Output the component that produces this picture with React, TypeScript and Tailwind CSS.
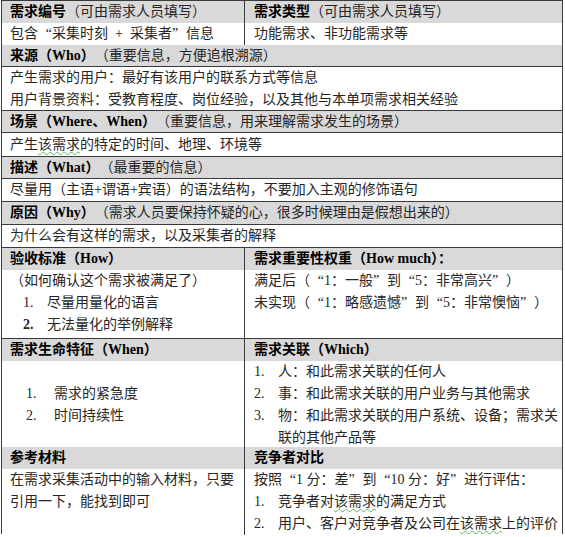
import type { ReactNode } from "react";

const line = "border-[#3a3a3a]";

function Cell({ children, gray, className = "" }: { children?: ReactNode; gray?: boolean; className?: string }) {
  return (
    <div className={`${gray ? "bg-[#d9d9d9]" : "bg-white"} ${className}`}>{children}</div>
  );
}

function Item({ n, lead, gap, children }: { n: string; lead: string; gap: string; children: ReactNode }) {
  return (
    <div className={`flex ${lead}`}>
      <span className={`shrink-0 ${gap}`}>{n}</span>
      <span>{children}</span>
    </div>
  );
}

function Sq({ children }: { children: ReactNode }) {
  return (
    <span className="underline decoration-wavy decoration-[#5cb85c] decoration-1 underline-offset-[2px]">
      {children}
    </span>
  );
}

// full-width curly quotes, like the song font in the source
function L() {
  return <span className="inline-block w-[14px] text-right">“</span>;
}
function R() {
  return <span className="inline-block w-[14px] text-left">”</span>;
}

export default function App() {
  return (
    <div className="min-h-[537px] bg-white">
      <div
        className={`ml-px w-[562px] border ${line} bg-white text-[14px] leading-[22px] text-[#262626] font-['Liberation_Serif','Noto_Sans_CJK_SC',serif]`}
      >
        {/* 编号 / 类型 */}
        <div className={`grid h-[22px] grid-cols-[243px_1fr] border-b ${line}`}>
          <Cell gray className={`flex items-center border-r ${line} pl-2`}>
            <b className="text-black">需求编号</b>（可由需求人员填写）
          </Cell>
          <Cell gray className="flex items-center pl-[9px]">
            <b className="text-black">需求类型</b>（可由需求人员填写）
          </Cell>
        </div>
        <div className={`grid h-[22px] grid-cols-[243px_1fr] border-b ${line}`}>
          <Cell className={`flex items-center border-r ${line} pl-2 whitespace-pre`}>
            包含<L />采集时刻{"  +  "}采集者<R />信息
          </Cell>
          <Cell className="flex items-center pl-[9px]">功能需求、非功能需求等</Cell>
        </div>

        {/* 来源 */}
        <Cell gray className={`flex h-[22px] items-center border-b ${line} pl-2`}>
          <b className="text-black">来源（Who）</b>（重要信息，方便追根溯源）
        </Cell>
        <Cell className={`flex h-[44px] flex-col justify-center border-b ${line} pl-2`}>
          <div>产生需求的用户：最好有该用户的联系方式等信息</div>
          <div>用户背景资料：受教育程度、岗位经验，以及其他与本单项需求相关经验</div>
        </Cell>

        {/* 场景 */}
        <Cell gray className={`flex h-[22px] items-center border-b ${line} pl-2`}>
          <b className="text-black">场景（Where、When）</b>（重要信息，用来理解需求发生的场景）
        </Cell>
        <Cell className={`flex h-[24px] items-center border-b ${line} pl-2`}>
          产生<Sq>该需求</Sq>的特定的时间、地理、环境等
        </Cell>

        {/* 描述 */}
        <Cell gray className={`flex h-[22px] items-center border-b ${line} pl-2`}>
          <b className="text-black">描述（What）</b>（最重要的信息）
        </Cell>
        <Cell className={`flex h-[23px] items-center border-b ${line} pl-2`}>
          尽量用（主语+谓语+宾语）的语法结构，不要加入主观的修饰语句
        </Cell>

        {/* 原因 */}
        <Cell gray className={`flex h-[23px] items-center border-b ${line} pl-2`}>
          <b className="text-black">原因（Why）</b>（需求人员要保持怀疑的心，很多时候理由是假想出来的）
        </Cell>
        <Cell className={`flex h-[23px] items-center border-b ${line} pl-2`}>
          为什么会有这样的需求，以及采集者的解释
        </Cell>

        {/* 验收标准 / 重要性 */}
        <div className={`grid h-[22px] grid-cols-[243px_1fr] border-b ${line}`}>
          <Cell gray className={`flex items-center border-r ${line} pl-2`}>
            <b className="text-black">验收标准（How）</b>
          </Cell>
          <Cell gray className="flex items-center pl-[9px]">
            <b className="text-black">需求重要性权重（How much）：</b>
          </Cell>
        </div>
        <div className={`grid h-[69px] grid-cols-[243px_1fr] border-b ${line}`}>
          <Cell className={`border-r ${line} pl-2`}>
            <div>（如何确认这个需求被满足了）</div>
            <Item n="1." lead="ml-[13px]" gap="w-[24px]">尽量用量化的语言</Item>
            <Item n="2." lead="ml-[13px]" gap="w-[24px] font-bold">无法量化的举例解释</Item>
          </Cell>
          <Cell className="pl-[9px]">
            <div>
              满足后（<L />1：一般<R />到<L />5：非常高兴<R />）
            </div>
            <div>
              未实现（<L />1：略感遗憾<R />到<L />5：非常懊恼<R />）
            </div>
          </Cell>
        </div>

        {/* 生命特征 / 关联 */}
        <div className={`grid h-[22px] grid-cols-[243px_1fr] border-b ${line}`}>
          <Cell gray className={`flex items-center border-r ${line} pl-2`}>
            <b className="text-black">需求生命特征（When）</b>
          </Cell>
          <Cell gray className="flex items-center pl-[9px]">
            <b className="text-black">需求关联（Which）</b>
          </Cell>
        </div>
        <div className={`grid h-[86px] grid-cols-[243px_1fr] border-b ${line}`}>
          <Cell className={`flex flex-col justify-center border-r ${line} pl-2`}>
            <Item n="1." lead="ml-[16px]" gap="w-[28px]">需求的紧急度</Item>
            <Item n="2." lead="ml-[16px]" gap="w-[28px]">时间持续性</Item>
          </Cell>
          <Cell className="pl-[9px] pr-1">
            <Item n="1." lead="" gap="w-[24px]">人：和此需求关联的任何人</Item>
            <Item n="2." lead="" gap="w-[24px]">事：和此需求关联的用户业务与其他需求</Item>
            <Item n="3." lead="" gap="w-[24px]">物：和此需求关联的用户系统、设备；需求关联的其他产品等</Item>
          </Cell>
        </div>

        {/* 参考材料 / 竞争者 */}
        <div className={`grid h-[22px] grid-cols-[243px_1fr] border-b ${line}`}>
          <Cell gray className={`flex items-center border-r ${line} pl-2`}>
            <b className="text-black">参考材料</b>
          </Cell>
          <Cell gray className="flex items-center pl-[9px]">
            <b className="text-black">竞争者对比</b>
          </Cell>
        </div>
        <div className="grid h-[64px] grid-cols-[243px_1fr]">
          <Cell className={`border-r ${line} pl-2 pr-1`}>
            在需求采集活动中的输入材料，只要引用一下，能找到即可
          </Cell>
          <Cell className="pl-[9px]">
            <div>
              按照<L />1 分：差<R />到<L />10 分：好<R />进行评估：
            </div>
            <Item n="1." lead="" gap="w-[24px]">
              竞争者对<Sq>该需求</Sq>的满足方式
            </Item>
            <Item n="2." lead="" gap="w-[24px]">
              用户、客户对竞争者及公司在<Sq>该需求</Sq>上的评价
            </Item>
          </Cell>
        </div>
      </div>
    </div>
  );
}
